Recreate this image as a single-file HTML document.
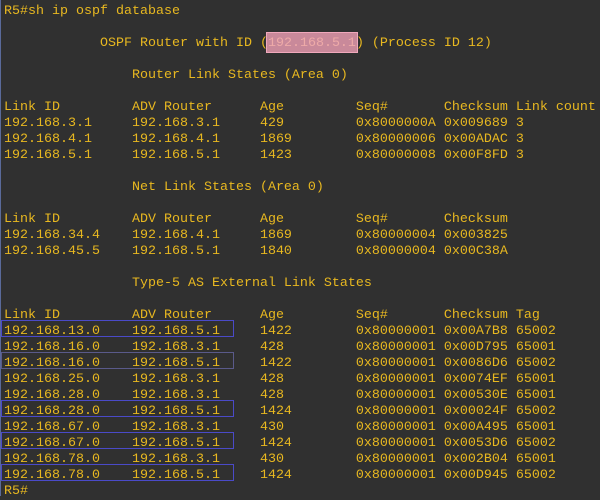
<!DOCTYPE html>
<html><head><meta charset="utf-8"><style>
html,body{margin:0;padding:0;background:#303030;width:600px;height:496px;overflow:hidden}
#l{position:absolute;left:0;top:0;width:1px;height:496px;background:#5a6a9a}
pre{position:absolute;left:4px;top:4px;margin:0;font-family:"Liberation Mono",monospace;font-size:13.33px;line-height:16px;color:#e8b820;letter-spacing:0}
.b{position:absolute;left:1px;width:231px;height:15px;border:1px solid #4a4ac8}
.p{position:absolute;left:266px;top:32px;width:90px;height:19px;background:#c9899a;border:1px solid #f0a8bc}
.pt{color:#eeaaa8}
</style></head><body>
<div id="l"></div>
<div class="p"></div>
<div class="b" style="top:320px"></div>
<div class="b" style="top:352px;border-color:#5a5a8a"></div>
<div class="b" style="top:400px"></div>
<div class="b" style="top:432px"></div>
<div class="b" style="top:464px"></div>
<pre>R5#sh ip ospf database

            OSPF Router with ID (<span class="pt">192.168.5.1</span>) (Process ID 12)

                Router Link States (Area 0)

Link ID         ADV Router      Age         Seq#       Checksum Link count
192.168.3.1     192.168.3.1     429         0x8000000A 0x009689 3
192.168.4.1     192.168.4.1     1869        0x80000006 0x00ADAC 3
192.168.5.1     192.168.5.1     1423        0x80000008 0x00F8FD 3

                Net Link States (Area 0)

Link ID         ADV Router      Age         Seq#       Checksum
192.168.34.4    192.168.4.1     1869        0x80000004 0x003825
192.168.45.5    192.168.5.1     1840        0x80000004 0x00C38A

                Type-5 AS External Link States

Link ID         ADV Router      Age         Seq#       Checksum Tag
192.168.13.0    192.168.5.1     1422        0x80000001 0x00A7B8 65002
192.168.16.0    192.168.3.1     428         0x80000001 0x00D795 65001
192.168.16.0    192.168.5.1     1422        0x80000001 0x0086D6 65002
192.168.25.0    192.168.3.1     428         0x80000001 0x0074EF 65001
192.168.28.0    192.168.3.1     428         0x80000001 0x00530E 65001
192.168.28.0    192.168.5.1     1424        0x80000001 0x00024F 65002
192.168.67.0    192.168.3.1     430         0x80000001 0x00A495 65001
192.168.67.0    192.168.5.1     1424        0x80000001 0x0053D6 65002
192.168.78.0    192.168.3.1     430         0x80000001 0x002B04 65001
192.168.78.0    192.168.5.1     1424        0x80000001 0x00D945 65002
R5#</pre>
</body></html>
